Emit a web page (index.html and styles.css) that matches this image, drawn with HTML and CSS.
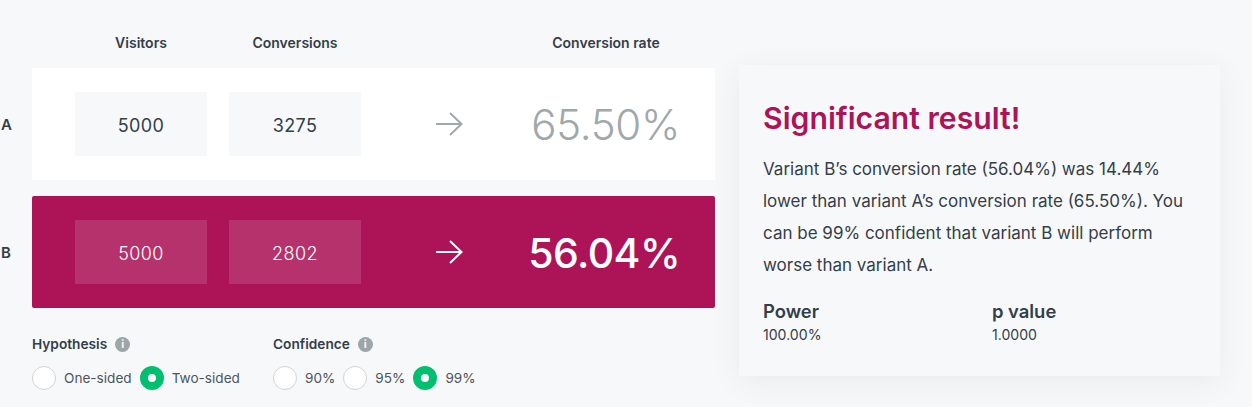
FILE: index.html
```html
<!DOCTYPE html>
<html lang="en">
<head>
<meta charset="utf-8">
<title>A/B test calculator</title>
<link rel="stylesheet" href="styles.css">
</head>
<body>
<main class="page">
  <section class="calc">
    <div class="heads">
      <span class="head head-vis">Visitors</span>
      <span class="head head-con">Conversions</span>
      <span class="head head-rate">Conversion rate</span>
    </div>
    <div class="line">
      <span class="variant">A</span>
      <div class="row row-a">
        <span class="field">5000</span>
        <span class="field">3275</span>
        <svg class="arrow" viewBox="0 0 28 24" width="28" height="24"><path d="M1 12H26.5M15 1L26.5 12L15 23" fill="none" stroke="currentColor" stroke-width="2"/></svg>
        <span class="rate">65.50%</span>
      </div>
    </div>
    <div class="line">
      <span class="variant">B</span>
      <div class="row row-b">
        <span class="field">5000</span>
        <span class="field">2802</span>
        <svg class="arrow" viewBox="0 0 28 24" width="28" height="24"><path d="M1 12H26.5M15 1L26.5 12L15 23" fill="none" stroke="currentColor" stroke-width="2"/></svg>
        <span class="rate">56.04%</span>
      </div>
    </div>
    <div class="options">
      <div class="group group-hyp">
        <div class="group-title">Hypothesis <span class="info">i</span></div>
        <div class="radios">
          <span class="radio"></span><span class="radio-label">One-sided</span>
          <span class="radio on"></span><span class="radio-label">Two-sided</span>
        </div>
      </div>
      <div class="group">
        <div class="group-title">Confidence <span class="info">i</span></div>
        <div class="radios">
          <span class="radio"></span><span class="radio-label">90%</span>
          <span class="radio"></span><span class="radio-label">95%</span>
          <span class="radio on"></span><span class="radio-label">99%</span>
        </div>
      </div>
    </div>
  </section>
  <aside class="result">
    <h2 class="result-title">Significant result!</h2>
    <p class="result-text">Variant B’s conversion rate (56.04%) was 14.44% lower than variant A’s conversion rate (65.50%). You can be 99% confident that variant B will perform worse than variant A.</p>
    <div class="stats">
      <div class="stat"><div class="stat-name">Power</div><div class="stat-val">100.00%</div></div>
      <div class="stat"><div class="stat-name">p value</div><div class="stat-val">1.0000</div></div>
    </div>
  </aside>
</main>
</body>
</html>
```
FILE: styles.css
```css
* { box-sizing: border-box; }
html, body { margin: 0; height: 100%; }
body {
  background: #f7f8fa;
  color: #333e48;
  font-family: "Inter", "Open Sans", sans-serif;
  overflow: hidden;
}
.page {
  display: flex;
  align-items: flex-start;
  padding-top: 34px;
}
.calc { width: 715px; flex: none; }
.heads {
  height: 34px;
  padding-left: 32px;
  display: flex;
  align-items: flex-start;
  font-size: 14px;
  font-weight: 600;
  line-height: 18px;
}
.head { display: block; text-align: center; }
.head-vis { width: 132px; margin-left: 43px; }
.head-con { width: 132px; margin-left: 22px; }
.head-rate { width: 160px; margin-left: 165px; }
.line { display: flex; align-items: center; margin-bottom: 16px; }
.variant {
  width: 32px;
  flex: none;
  font-size: 15px;
  font-weight: 600;
  line-height: 20px;
  padding: 2px 0 0 1px;
}
.row {
  flex: 1;
  height: 112px;
  display: flex;
  align-items: center;
  padding: 0 35px 0 43px;
}
.row-a { background: #fff; color: #a0a8aa; }
.row-b { background: #ac1457; color: #fff; border-radius: 2px; }
.field {
  width: 132px;
  height: 64px;
  margin-right: 22px;
  padding-top: 2px;
  display: flex;
  align-items: center;
  justify-content: center;
  font-size: 18px;
  letter-spacing: .4px;
  font-weight: 400;
  background: #f7f8fa;
  color: #333e48;
}
.row-b .field { background: rgba(255,255,255,.13); color: #fff; font-weight: 300; }
.arrow { margin-left: 52px; flex: none; }
.rate {
  margin-left: auto;
  padding-top: 2px;
  font-size: 42px;
  line-height: 56px;
  letter-spacing: -.3px;
  font-weight: 300;
}
.row-b .rate { font-weight: 500; font-size: 41px; letter-spacing: -.6px; }
.options { display: flex; padding-left: 32px; padding-top: 11px; }
.group-hyp { width: 241px; }
.group-title {
  display: flex;
  align-items: center;
  gap: 8px;
  font-size: 13.7px;
  font-weight: 600;
  line-height: 18px;
}
.info {
  width: 15px;
  height: 15px;
  border-radius: 50%;
  background: #9da5a8;
  color: #f7f8fa;
  font-size: 11px;
  font-weight: 700;
  line-height: 15px;
  text-align: center;
}
.radios { display: flex; align-items: center; margin-top: 13px; }
.radio {
  width: 24px;
  height: 24px;
  border-radius: 50%;
  border: 1px solid #d0d4d6;
  background: #fff;
  flex: none;
}
.radio.on { border: 8px solid #00bf6f; }
.radio-label { font-size: 13.6px; margin: 0 8px; color: #4b555e; }
.result {
  margin-left: 24px;
  margin-top: 31px;
  width: 481px;
  height: 311px;
  padding: 34px 24px 0;
  background: #f7f8fa;
  box-shadow: 0 6px 30px rgba(0,0,0,.06);
}
.result-title {
  margin: 0;
  color: #ac1457;
  font-size: 30.2px;
  font-weight: 600;
  line-height: 38px;
}
.result-text {
  margin: 16px -6px 0 0;
  font-size: 17px;
  font-weight: 400;
  line-height: 32px;
}
.stats { display: flex; margin-top: 18px; }
.stat { width: 229px; flex: none; }
.stat-name { font-size: 18.4px; font-weight: 600; line-height: 24px; }
.stat-val { font-size: 14.1px; line-height: 24px; font-weight: 400; }
```
